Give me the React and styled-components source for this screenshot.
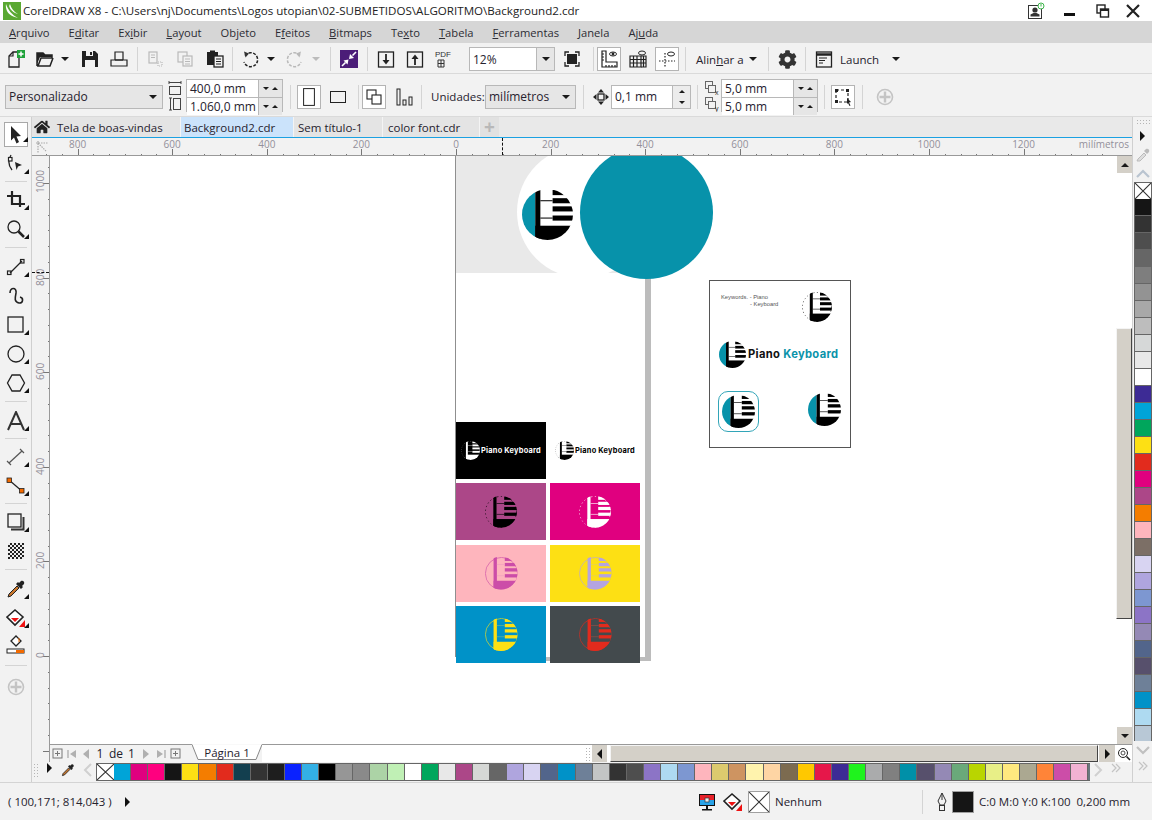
import React from "react";
import styled, { createGlobalStyle } from "styled-components";
import { FaHome, FaCog } from "react-icons/fa";

const GlobalStyle = createGlobalStyle`
  html, body { margin: 0; padding: 0; background: #f2f2f2; overflow: hidden; }
  #root { width: 1152px; height: 820px; overflow: hidden; }
  * { box-sizing: border-box; }
`;

const Window = styled.div`
  width: 1152px;
  height: 820px;
  display: flex;
  flex-direction: column;
  font-family: "Open Sans", "Noto Sans", sans-serif;
  font-size: 11.5px;
  color: #26222e;
  background: #f2f2f2;
`;

const TitleBar = styled.div`
  height: 21px;
  background: #fff;
  display: flex;
  align-items: center;
  padding: 0 0 0 3px;
  color: #222;
  font-size: 11.6px;
`;
const TitleText = styled.span`
  margin-left: 2px;
  flex: 1;
  white-space: nowrap;
`;
const WinBtn = styled.div`
  width: ${(p) => p.$w}px;
  display: flex;
  justify-content: center;
`;

const MenuBar = styled.div`
  height: 22px;
  background: #d6d6d6;
  display: flex;
  align-items: center;
  gap: 19px;
  padding-left: 9px;
  font-size: 11.2px;
  color: #2c2c34;
`;

const Bar = styled.div`
  height: ${(p) => p.$h}px;
  background: #f2f2f2;
  border-bottom: 1px solid #dadada;
  display: flex;
  align-items: center;
  padding-left: ${(p) => p.$pad}px;
  padding-top: ${(p) => p.$top}px;
`;
const Slot = styled.div`
  flex: 0 0 ${(p) => p.$w}px;
  min-width: 0;
  display: flex;
  align-items: center;
  justify-content: center;
`;
const Sep = styled.div`
  flex: 0 0 ${(p) => p.$w}px;
  height: 24px;
  display: flex;
  justify-content: center;
  &::after {
    content: "";
    width: 1px;
    background: #d4d4d4;
  }
`;
const Toggled = styled.div`
  flex: 0 0 24px;
  height: 24px;
  background: #fff;
  border: 1px solid #b4b4b4;
  display: flex;
  align-items: center;
  justify-content: center;
`;
const BarText = styled.span`
  flex: 0 0 ${(p) => p.$w}px;
  padding-left: ${(p) => p.$pad || 0}px;
  white-space: nowrap;
`;

const Combo = styled.div`
  flex: 0 0 ${(p) => p.$w}px;
  height: 24px;
  border: 1px solid #b8b8b8;
  background: ${(p) => (p.$white ? "#fff" : "#e6e6e6")};
  display: flex;
  align-items: center;
  padding-left: 3px;
  position: relative;
  font-size: 12px;
  span { flex: 1; }
`;
const ComboArrow = styled.div`
  width: 18px;
  align-self: stretch;
  background: #e6e6e6;
  border-left: ${(p) => (p.$line ? "1px solid #b8b8b8" : "none")};
  display: flex;
  align-items: center;
  justify-content: center;
`;
const Arrow = styled.i`
  display: block;
  width: 0;
  height: 0;
  border-left: ${(p) => p.$s || 4}px solid transparent;
  border-right: ${(p) => p.$s || 4}px solid transparent;
  ${(p) => (p.$up ? "border-bottom" : "border-top")}: ${(p) => p.$s || 4}px solid ${(p) => p.$c || "#1a1a1a"};
`;
const SideArrow = styled.i`
  display: block;
  width: 0;
  height: 0;
  border-top: 5px solid transparent;
  border-bottom: 5px solid transparent;
  ${(p) => (p.$left ? "border-right" : "border-left")}: 5px solid ${(p) => p.$c || "#111"};
`;

const Stepper = styled.div`
  flex: 0 0 97px;
  height: 33px;
  margin-top: -2px;
  display: flex;
  flex-direction: column;
  border: 1px solid #b8b8b8;
  background: #b8b8b8;
  gap: 1px;
`;
const StepRow = styled.div`
  flex: 1;
  display: flex;
  background: #fff;
  align-items: center;
  padding-left: 3px;
  font-size: 12px;
  span { flex: 1; }
`;
const StepSpin = styled.div`
  width: 24px;
  align-self: stretch;
  background: #e6e6e6;
  border-left: 1px solid #b8b8b8;
  display: flex;
  align-items: center;
  justify-content: space-around;
  padding: 0 2px;
`;
const SpinBox = styled.div`
  flex: 0 0 80px;
  height: 24px;
  border: 1px solid #b8b8b8;
  background: #fff;
  display: flex;
  align-items: center;
  padding-left: 3px;
  font-size: 12px;
  span { flex: 1; }
`;
const SpinCol = styled.div`
  width: 18px;
  align-self: stretch;
  background: #ececec;
  border-left: 1px solid #b8b8b8;
  display: flex;
  flex-direction: column;
  align-items: center;
  justify-content: space-around;
`;

const Workspace = styled.div`
  height: 665px;
  display: flex;
`;
const ToolCol = styled.div`
  flex: 0 0 32px;
  border-right: 1px solid #cfcfcf;
  background: #f2f2f2;
  display: flex;
  flex-direction: column;
  align-items: center;
  padding-top: 5px;
`;
const Tool = styled.div`
  flex: 0 0 29px;
  width: 24px;
  position: relative;
  display: flex;
  align-items: center;
  justify-content: center;
  margin-top: ${(p) => p.$mt || 0}px;
  ${(p) => p.$active && "background:#fff;border:1px solid #a8a8a8;flex-basis:25px;margin-bottom:2px;"}
  ${(p) =>
    p.$corner &&
    `&::after {
      content: "";
      position: absolute;
      right: -1px;
      bottom: 4px;
      border-left: 5px solid transparent;
      border-bottom: 5px solid #111;
    }`}
`;
const ToolSep = styled.div`
  flex: 0 0 ${(p) => p.$h}px;
  width: 22px;
  display: flex;
  align-items: center;
  &::after {
    content: "";
    width: 100%;
    height: 1px;
    background: #d4d4d4;
  }
`;

const Center = styled.div`
  flex: 1;
  min-width: 0;
  display: flex;
  flex-direction: column;
`;
const TabRow = styled.div`
  height: 21px;
  background: #e9e9e9;
  border-bottom: 1px solid #1ba1e2;
  display: flex;
  font-size: 11.5px;
`;
const Tab = styled.div`
  flex: 0 0 ${(p) => p.$w}px;
  background: ${(p) => (p.$active ? "#cbe3fb" : "#e4e4e4")};
  border-right: 1px solid #f4f4f4;
  display: flex;
  align-items: center;
  padding-left: ${(p) => p.$pad}px;
  white-space: nowrap;
  gap: 7px;
`;
const PlusTab = styled.div`
  flex: 0 0 19px;
  background: #e1e1e1;
  color: #b8b8b8;
  font-size: 19px;
  font-weight: 700;
  line-height: 20px;
  text-align: center;
`;

const HRuler = styled.div`
  height: 18px;
  position: relative;
  background: #f2f2f2;
  border-bottom: 1px solid #999;
  overflow: hidden;
`;
const RulerCorner = styled.div`
  position: absolute;
  left: 3px;
  top: 2px;
`;
const HTick = styled.div`
  position: absolute;
  bottom: 0;
  width: 1px;
  height: ${(p) => p.$h}px;
  background: #777;
`;
const HLabel = styled.div`
  position: absolute;
  top: 0;
  width: 40px;
  margin-left: -20px;
  text-align: center;
  font-size: 10px;
  line-height: 13px;
  color: #93909a;
`;
const UnitLabel = styled.div`
  position: absolute;
  right: 3px;
  top: 0;
  font-size: 10px;
  line-height: 13px;
  color: #93909a;
  background: #f2f2f2;
  padding-left: 2px;
`;
const HCursor = styled.div`
  position: absolute;
  left: 470px;
  top: 0;
  bottom: 0;
  border-left: 1px dashed #111;
`;

const MainRow = styled.div`
  flex: 1;
  min-height: 0;
  display: flex;
`;
const VRuler = styled.div`
  flex: 0 0 18px;
  position: relative;
  background: #f2f2f2;
  border-right: 1px solid #999;
  overflow: hidden;
`;
const VTick = styled.div`
  position: absolute;
  right: 0;
  height: 1px;
  width: ${(p) => p.$w}px;
  background: #777;
`;
const VLabel = styled.div`
  position: absolute;
  left: 3px;
  height: 30px;
  margin-top: -16px;
  writing-mode: vertical-rl;
  transform: rotate(180deg);
  text-align: center;
  font-size: 10px;
  line-height: 11px;
  color: #93909a;
`;
const VCursor = styled.div`
  position: absolute;
  left: 0;
  right: 0;
  top: 116px;
  border-top: 1px dashed #111;
`;
const ViewCol = styled.div`
  flex: 1;
  min-width: 0;
  display: flex;
  flex-direction: column;
`;
const ViewRow = styled.div`
  flex: 1;
  min-height: 0;
  display: flex;
`;
const Canvas = styled.div`
  flex: 1;
  position: relative;
  background: #fff;
  overflow: hidden;
`;

const Page = styled.div`
  position: absolute;
  left: 405px;
  top: 0;
  width: 190px;
  height: 501px;
  background: #fff;
  border-left: 1px solid #8f8f8f;
  box-shadow: 6px 4px 0 #bcbcbc;
`;
const GrayBand = styled.div`
  height: 117px;
  background: #e9e9e9;
`;
const Disc = styled.div`
  position: absolute;
  left: ${(p) => p.$x}px;
  top: ${(p) => p.$y}px;
  width: ${(p) => p.$d}px;
  height: ${(p) => p.$d}px;
  border-radius: 50%;
  background: ${(p) => p.$c};
`;
const CardGrid = styled.div`
  position: absolute;
  left: 0;
  top: 266px;
  display: grid;
  grid-template-columns: 90px 90px;
  grid-auto-rows: 57px;
  gap: 4.3px 4px;
`;
const Card = styled.div`
  background: ${(p) => p.$bg};
  display: flex;
  align-items: center;
  justify-content: center;
  gap: 1px;
`;
const MiniBrand = styled.span`
  font-family: Inter, "Liberation Sans", sans-serif;
  font-size: 7.4px;
  font-weight: 700;
  letter-spacing: 0.22px;
  color: ${(p) => p.$c};
  white-space: nowrap;
`;
const Artboard = styled.div`
  position: absolute;
  left: 659px;
  top: 124px;
  width: 142px;
  height: 168px;
  background: #fff;
  border: 1px solid #555;
`;
const ArtItem = styled.div`
  position: absolute;
  left: ${(p) => p.$x}px;
  top: ${(p) => p.$y}px;
`;
const Keywords = styled.div`
  font-family: "Liberation Sans", sans-serif;
  font-size: 5.8px;
  line-height: 7px;
  color: #555;
  white-space: pre;
`;
const Brand = styled.div`
  font-family: Inter, "Liberation Sans", sans-serif;
  font-size: 11.2px;
  font-weight: 700;
  letter-spacing: 0.32px;
  color: #111;
  white-space: nowrap;
  span { color: #0a93aa; margin-left: 3px; }
`;
const AppIcon = styled.div`
  width: 41px;
  height: 41px;
  border: 1px solid #32a5b8;
  border-radius: 10px;
  background: #fff;
  display: flex;
  align-items: center;
  justify-content: center;
`;

const LogoSvg = styled.svg`
  display: block;
  flex: none;
  clip-path: circle(50%);
`;

// piano keyboard mark, the only drawing that repeats on the artboard
const Logo = ({ size, color = "#000", accent, ring, line = color }) => (
  <LogoSvg width={size} height={size} viewBox="0 0 50 50">
    {accent && <rect x="0" y="0" width="13" height="50" fill={accent} />}
    {ring && (
      <circle
        cx="25"
        cy="25"
        r="24.4"
        fill="none"
        stroke={ring}
        strokeWidth="1.2"
        strokeDasharray={ring === color ? "2 4" : "none"}
      />
    )}
    <rect x="13" y="0" width="5" height="50" fill={color} />
    <rect x="13" y="36" width="37" height="14" fill={color} />
    <rect x="30" y="1" width="20" height="5" fill={color} />
    <rect x="30" y="9" width="20" height="5" fill={color} />
    <rect x="30" y="17" width="20" height="5" fill={color} />
    <rect x="30" y="26" width="20" height="5" fill={color} />
    <rect x="18" y="11" width="12" height="1" fill={line} />
    <rect x="18" y="28" width="12" height="1" fill={line} />
  </LogoSvg>
);

const VScroll = styled.div`
  flex: 0 0 17px;
  background: #fff;
  display: flex;
  flex-direction: column;
  padding-left: 1px;
`;
const ScrollBtn = styled.div`
  flex: 0 0 17px;
  background: #d4d0c8;
  display: flex;
  align-items: center;
  justify-content: center;
  border-left: 1px solid #fff;
`;
const VThumb = styled.div`
  height: 291px;
  margin-top: 155px;
  margin-bottom: auto;
  background: #d4d0c8;
  border-top: 1px solid #f4f4f4;
  border-left: 1px solid #f4f4f4;
  border-right: 1px solid #444;
  border-bottom: 1px solid #444;
`;

const DocBar = styled.div`
  flex: 0 0 18px;
  display: flex;
  background: #f2f2f2;
`;
const Pager = styled.div`
  flex: 0 0 142px;
  border-top: 1px solid #999;
  display: flex;
  align-items: center;
  color: #22202a;
  font-size: 12px;
`;
const PagerSlot = styled.div`
  flex: 0 0 ${(p) => p.$w}px;
  display: flex;
  justify-content: center;
`;
const PageTab = styled.div`
  flex: 0 0 70px;
  height: 17px;
  position: relative;
  display: flex;
  align-items: center;
  justify-content: center;
  font-size: 11.5px;
  svg { position: absolute; left: 0; top: 0; }
  span { position: relative; }
`;
const TabFiller = styled.div`
  flex: 0 0 324px;
  border-top: 1px solid #999;
  background: #fff;
`;
const HScroll = styled.div`
  flex: 1;
  border-top: 1px solid #999;
  background: #fff;
  display: flex;
`;
const HBtn = styled.div`
  flex: 0 0 ${(p) => p.$w}px;
  min-width: 0;
  background: ${(p) => p.$bg};
  display: flex;
  align-items: center;
  justify-content: center;
`;
const HThumb = styled.div`
  flex: 1;
  margin: 0 1px 0 3px;
  background: #d4d0c8;
  border-top: 1px solid #f4f4f4;
  border-left: 1px solid #f4f4f4;
  border-right: 1px solid #444;
  border-bottom: 1px solid #444;
`;

const PaletteRow = styled.div`
  flex: 0 0 20px;
  display: flex;
  align-items: flex-start;
  padding-top: 1px;
  background: #f2f2f2;
`;
const Swatches = styled.div`
  flex: 0 0 994px;
  height: 18px;
  display: flex;
  overflow: hidden;
  border: 1px solid #666;
  border-right: none;
`;
const Swatch = styled.div`
  flex: 0 0 17.1px;
  height: 100%;
  border-right: 1px solid #666;
  background: ${(p) => p.$c};
`;
const NoFill = styled.svg`
  display: block;
  flex: none;
  background: #fff;
`;

const RightDock = styled.div`
  flex: 0 0 20px;
  border-left: 1px solid #d0d0d0;
  display: flex;
  flex-direction: column;
  align-items: center;
`;
const DockItem = styled.div`
  flex: 0 0 ${(p) => p.$h}px;
  min-height: 0;
  display: flex;
  align-items: center;
  justify-content: center;
`;
const DockPalette = styled.div`
  width: 18px;
  height: 559px;
  flex: none;
  overflow: hidden;
  border-left: 1px solid #666;
  border-right: 1px solid #666;
  border-top: 1px solid #666;
`;
const DockSwatch = styled.div`
  height: 17px;
  border-bottom: 1px solid #666;
  background: ${(p) => p.$c};
`;

const StatusBar = styled.div`
  flex: 1;
  border-top: 1px solid #d4d4d4;
  display: flex;
  align-items: center;
  padding-left: 8px;
  font-size: 11.5px;
`;
const StatusSwatch = styled.div`
  flex: 0 0 22px;
  height: 22px;
  border: 1px solid #a0a0a0;
  background: ${(p) => p.$c || "#151515"};
`;
const StatusItem = styled.div`
  flex: 0 0 ${(p) => p.$w}px;
  display: flex;
  align-items: center;
  justify-content: ${(p) => (p.$start ? "flex-start" : "center")};
  padding-left: ${(p) => p.$pad || 0}px;
  white-space: nowrap;
`;
const StatusRule = styled.div`
  flex: 0 0 1px;
  height: 24px;
  margin-right: 8px;
  background: #d4d4d4;
`;

const Gear = styled(FaCog)`
  color: #333;
  font-size: 19px;
`;
const Home = styled(FaHome)`
  color: #222;
  font-size: 16px;
  flex: none;
`;

const S = ({ w = 20, h = 20, vb, children }) => (
  <svg width={w} height={h} viewBox={vb || `0 0 ${w} ${h}`} fill="none" stroke="#222" strokeWidth="1.2" style={{ display: "block", flex: "none" }}>
    {children}
  </svg>
);

const CrossBox = ({ w, h }) => (
  <NoFill width={w} height={h} viewBox="0 0 20 20" preserveAspectRatio="none" stroke="#333" strokeWidth="1.1">
    <path d="M0 0L20 20M20 0L0 20" vectorEffect="non-scaling-stroke" />
  </NoFill>
);

const gray = "#b9b9b9";
const Icons = {
  corel: (
    <svg width="18" height="18" viewBox="0 0 18 18" style={{ display: "block" }}>
      <rect width="18" height="18" fill="#5aa832" />
      <path d="M3 2C5 8 9 13 15 16C11 15 6 13 4 9C3 7 2.6 4 3 2Z" fill="#fff" />
      <path d="M7 2C8 6 11 10 15 12C11 11 7.4 8 6.4 5C6 4 6.4 3 7 2Z" fill="#fff" />
    </svg>
  ),
  user: (
    <svg width="18" height="18" viewBox="0 0 18 18" fill="none" style={{ display: "block" }}>
      <rect x="1.5" y="3.5" width="13" height="13" stroke="#333" />
      <circle cx="8" cy="8" r="2.6" fill="#333" />
      <path d="M3.5 14.5h9v-2l-3-1.6h-3l-3 1.6z" fill="#333" />
      <circle cx="14" cy="4" r="3" stroke="#3cb54a" fill="#fff" />
      <path d="M14 2v2.5" stroke="#3cb54a" />
    </svg>
  ),
  min: <S w={12} h={12}><rect x="0" y="8" width="11" height="3" fill="#111" stroke="none" /></S>,
  restore: (
    <S w={14} h={14}>
      <rect x="1" y="1" width="8" height="8" strokeWidth="1.4" />
      <rect x="4.5" y="5" width="8" height="8" fill="#fff" strokeWidth="1.4" />
      <path d="M4.5 6h8" strokeWidth="2" />
    </S>
  ),
  close: <S w={14} h={14}><path d="M1 1l12 12M13 1L1 13" strokeWidth="2.2" /></S>,
  newDoc: (
    <S>
      <path d="M3 18V7l4-4h6v15z" strokeWidth="1.3" />
      <path d="M3 7h4V3" />
      <rect x="11" y="1" width="8" height="8" fill="#1fa23a" stroke="none" />
      <path d="M15 2.5v5M12.5 5h5" stroke="#fff" strokeWidth="1.5" />
    </S>
  ),
  open: (
    <S>
      <path d="M2 17V4h6l2 2h7v3H6L3 17h12l3-8" strokeWidth="1.5" fill="none" />
      <path d="M2 4h6l2 2h7v2H5L2 15z" fill="#222" stroke="none" />
    </S>
  ),
  save: (
    <S>
      <path d="M2 2h13l3 3v13H2z" fill="#222" stroke="none" />
      <rect x="6" y="2" width="7" height="5" fill="#f2f2f2" stroke="none" />
      <rect x="5" y="11" width="10" height="7" fill="#f2f2f2" stroke="none" />
      <rect x="10" y="3" width="2" height="3" fill="#222" stroke="none" />
    </S>
  ),
  print: (
    <S>
      <path d="M6 11V3h8v8" />
      <path d="M2 11h16v6H2z" />
      <path d="M6 11h8" />
    </S>
  ),
  cut: (
    <S>
      <g stroke={gray}>
        <rect x="4" y="3" width="8" height="11" />
        <path d="M6 6h4M6 8.5h4" />
        <rect x="13" y="13" width="4" height="4" strokeDasharray="1 1" />
      </g>
    </S>
  ),
  copy: (
    <S>
      <g stroke={gray}>
        <rect x="3" y="3" width="9" height="10" />
        <rect x="8" y="7" width="9" height="10" fill="#f2f2f2" />
        <path d="M10 10h5M10 12.500h5M10 15h5" />
      </g>
    </S>
  ),
  paste: (
    <S>
      <rect x="2" y="3" width="11" height="13" fill="#222" stroke="none" />
      <rect x="5" y="1.500" width="5" height="3" fill="#222" stroke="none" />
      <rect x="9" y="7" width="9" height="11" fill="#f2f2f2" strokeWidth="1.3" />
      <path d="M11 10h5M11 12.500h5M11 15h5" />
    </S>
  ),
  undo: (
    <S>
      <path d="M5 6.500A7 7 0 1 1 4 13" strokeWidth="1.5" strokeDasharray="3 1.500" />
      <path d="M4 2.500l5 2-3.500 4z" fill="#333" stroke="none" />
    </S>
  ),
  redo: (
    <S>
      <path d="M15 6.500A7 7 0 1 0 16 13" stroke={gray} strokeWidth="1.5" strokeDasharray="3 1.500" />
      <path d="M16 2.500l-5 2 3.500 4z" fill={gray} stroke="none" />
    </S>
  ),
  snap: (
    <svg width="18" height="18" viewBox="0 0 18 18" style={{ display: "block", flex: "none" }}>
      <rect width="18" height="18" fill="#4b1d78" />
      <path d="M16 2l-3.500 3.500" stroke="#fff" strokeWidth="1.600" />
      <path d="M9 9l5-1-4-4z" fill="#fff" />
      <path d="M2 16l3.500-3.500" stroke="#fff" strokeWidth="1.600" />
      <path d="M8.500 9.500l-5 1 4 4z" fill="#fff" />
    </svg>
  ),
  importFile: (
    <S>
      <rect x="2.500" y="3" width="15" height="15" strokeWidth="1.3" />
      <path d="M10 5v9" strokeWidth="1.800" />
      <path d="M6.500 11L10 15.500 13.500 11z" fill="#222" stroke="none" />
    </S>
  ),
  exportFile: (
    <S>
      <rect x="2.500" y="3" width="15" height="15" strokeWidth="1.3" />
      <path d="M10 9v7" strokeWidth="1.800" />
      <path d="M6.500 10L10 5.500 13.500 10z" fill="#222" stroke="none" />
    </S>
  ),
  fullscreen: (
    <S w={16} h={16}>
      <rect x="3" y="3" width="10" height="10" fill="#222" stroke="none" />
      <path d="M1 5V1h4M11 1h4v4M15 11v4h-4M5 15H1v-4" strokeWidth="1.3" />
    </S>
  ),
  rulers: (
    <S>
      <path d="M3 2h4v11h11v5H3z" strokeWidth="1.2" />
      <path d="M3 5h2M3 8h2M3 11h2M7 16v2M10 16v2M13 16v2M16 16v2" />
      <ellipse cx="14" cy="5" rx="3.500" ry="2" strokeWidth="1" />
      <circle cx="14" cy="5" r="0.800" fill="#222" />
    </S>
  ),
  grid: (
    <S>
      <path d="M2 7h11v11H2zM2 10.500h11M2 14h11M5.500 7v11M9 7v11" />
      <path d="M13 7h5v11h-5M13 10.500h5M13 14h5M15.500 7v11" />
      <ellipse cx="14" cy="4" rx="3.500" ry="2" strokeWidth="1" />
    </S>
  ),
  guides: (
    <S>
      <path d="M2 12h16" strokeDasharray="1.500 1.500" />
      <path d="M8 4v15" strokeDasharray="1.500 1.500" />
      <ellipse cx="14" cy="5" rx="3.500" ry="2" strokeWidth="1" />
    </S>
  ),
  launch: (
    <S>
      <rect x="2.500" y="3" width="15" height="15" strokeWidth="1.3" />
      <path d="M2.500 5.500h15" strokeWidth="2.500" />
      <path d="M5 9h8M5 11.500h6M5 14h4" />
    </S>
  ),
  portrait: <S w={12} h={18}><rect x="0.600" y="0.600" width="10.800" height="16.800" strokeWidth="1" /></S>,
  landscape: <S w={18} h={14}><rect x="1.500" y="1.500" width="15" height="11" strokeWidth="1" /></S>,
  pages: (
    <S w={18} h={18}>
      <rect x="2" y="2" width="9" height="9" strokeWidth="1.100" />
      <rect x="7" y="7" width="9" height="9" fill="#fff" strokeWidth="1.100" />
    </S>
  ),
  bars: (
    <S w={18} h={18}>
      <rect x="2" y="1" width="3" height="16" strokeWidth="1" />
      <rect x="8" y="12" width="3" height="5" strokeWidth="1" />
      <rect x="14" y="9" width="3" height="8" strokeWidth="1" />
    </S>
  ),
  nudge: (
    <S w={16} h={16}>
      <rect x="5" y="5" width="6" height="6" strokeWidth="1.300" />
      <path d="M8 0l3 3.500H5zM8 16l3-3.500H5zM0 8l3.500-3v6zM16 8l-3.500-3v6z" fill="#222" stroke="none" />
    </S>
  ),
  frame: (
    <S w={18} h={18}>
      <rect x="2" y="2" width="12" height="12" strokeDasharray="3 2" />
      <path d="M1 1h3v3H1zM12 1h3v3h-3zM1 12h3v3H1z" fill="#222" stroke="none" />
      <path d="M13 10l4 4-2 .500 1.500 3-1 .500-1.500-3-1 1z" fill="#222" stroke="none" />
    </S>
  ),
  plus: (
    <S w={18} h={18}>
      <circle cx="9" cy="9" r="7.500" stroke="#c4c4c4" strokeWidth="1.600" />
      <path d="M9 3.500v11M3.500 9h11" stroke="#c4c4c4" strokeWidth="2.400" />
    </S>
  ),
  pointer: (
    <svg width="14" height="20" viewBox="0 0 14 20" style={{ display: "block" }}>
      <path d="M2 1l10 10-4.500.500L10 17l-2.500 1.500-2.500-6-3 3z" fill="#222" />
    </svg>
  ),
  shape: (
    <S>
      <path d="M5 1C2 6 2 11 6 16" strokeWidth="1.300" />
      <rect x="2.500" y="3.500" width="3.500" height="3.500" fill="#fff" />
      <path d="M9 8l7 3-4 1.500-1.500 3.500z" fill="#222" stroke="none" />
    </S>
  ),
  crop: (
    <S>
      <path d="M1 6h13v11M6 1v13h13" strokeWidth="2.200" />
    </S>
  ),
  zoom: (
    <S>
      <circle cx="8" cy="8" r="6" strokeWidth="1.300" />
      <path d="M12.500 12.500L18 18" strokeWidth="2.500" />
    </S>
  ),
  line: (
    <S>
      <path d="M4 16L16 4" />
      <rect x="1.500" y="14" width="3.500" height="3.500" />
      <rect x="14.500" y="2.500" width="3.500" height="3.500" />
    </S>
  ),
  curve: (
    <S>
      <path d="M4 7C4 1 11 1 10 7c-1 5-2 9 3 10 4 .500 5-5 1-6" strokeWidth="1.600" />
    </S>
  ),
  rect: <S><rect x="2" y="2" width="15" height="15" strokeWidth="1.300" /></S>,
  ellipse: <S><circle cx="10" cy="10" r="8" strokeWidth="1.300" /></S>,
  polygon: <S><path d="M6 2h8l4.500 8-4.500 8H6l-4.500-8z" strokeWidth="1.300" /></S>,
  text: (
    <svg width="18" height="20" viewBox="0 0 18 20" fill="none" stroke="#333" strokeWidth="2" style={{ display: "block" }}>
      <path d="M1 19L9 1l8 18M4 13h10" />
    </svg>
  ),
  dim: (
    <S>
      <path d="M3 16L16 4" strokeWidth="1.200" stroke="#555" />
      <path d="M1 14l4 4M14 2l4 4" stroke="#555" />
    </S>
  ),
  connector: (
    <S>
      <path d="M3 4l14 12" />
      <rect x="1" y="2" width="4.500" height="4.500" fill="#f26a00" stroke="#222" strokeWidth="0.800" />
      <rect x="13.500" y="12.500" width="4.500" height="4.500" fill="#f26a00" stroke="#222" strokeWidth="0.800" />
    </S>
  ),
  shadow: (
    <S>
      <rect x="2" y="2" width="13" height="13" strokeWidth="1.300" />
      <path d="M17.500 5v12.500H5" strokeWidth="2" stroke="#333" />
    </S>
  ),
  checker: (
    <svg width="16" height="16" viewBox="0 0 16 16" style={{ display: "block" }}>
      <rect width="16" height="16" fill="#222" />
      {Array.from({ length: 32 }, (_, i) => {
        const row = Math.floor(i / 4);
        return <rect key={i} x={(i % 4) * 4 + (row % 2) * 2} y={row * 2} width="2" height="2" fill="#eee" />;
      })}
    </svg>
  ),
  dropper: (
    <svg width="20" height="20" viewBox="0 0 20 20" fill="none" style={{ display: "block" }}>
      <path d="M2 18l1-3 8-8 2 2-8 8z" fill="#c8762c" stroke="#222" />
      <path d="M10 5l5 5 2-2-1-1 2-2c1-2-1-4-3-3l-2 2-1-1z" fill="#222" />
    </svg>
  ),
  bucket: (
    <svg width="20" height="20" viewBox="0 0 20 20" fill="none" style={{ display: "block", flex: "none" }}>
      <path d="M1 9l8-7 8 7-8 8z" stroke="#222" strokeWidth="1.600" fill="#fff" />
      <path d="M5 10h8l-4 4z" fill="#e11" />
      <path d="M19 12v7h-6z" fill="#e11" />
    </svg>
  ),
  outline: (
    <svg width="20" height="20" viewBox="0 0 20 20" fill="none" style={{ display: "block" }}>
      <path d="M5 6l5-5 5 5-5 5z" stroke="#222" strokeWidth="1.300" fill="#fff" />
      <path d="M13 3v4" stroke="#f26a00" />
      <rect x="1" y="14" width="17" height="4" fill="#fff" stroke="#222" />
      <rect x="10" y="15" width="8" height="3" fill="#f26a00" />
    </svg>
  ),
  zoomSmall: (
    <S w={14} h={14}>
      <circle cx="6" cy="6" r="4.500" strokeWidth="1" />
      <circle cx="6" cy="6" r="2" strokeWidth="0.800" />
      <path d="M9.500 9.500L13 13" strokeWidth="1.600" />
    </S>
  ),
  pagerAdd: (
    <S w={11} h={11}>
      <rect x="1" y="1" width="9" height="9" stroke="#777" strokeWidth="1" />
      <path d="M5.500 3v5M3 5.500h5" stroke="#777" strokeWidth="1" />
    </S>
  ),
  first: (
    <S w={10} h={10}>
      <path d="M1 1v8" stroke="#b0b0b0" strokeWidth="1.400" />
      <path d="M9 1v8L3 5z" fill="#b0b0b0" stroke="none" />
    </S>
  ),
  prev: (
    <S w={8} h={10}>
      <path d="M7 0v10L1 5z" fill="#b0b0b0" stroke="none" />
    </S>
  ),
  next: (
    <S w={8} h={10}>
      <path d="M1 0v10l6-5z" fill="#b0b0b0" stroke="none" />
    </S>
  ),
  last: (
    <S w={10} h={10}>
      <path d="M9 1v8" stroke="#b0b0b0" strokeWidth="1.400" />
      <path d="M1 1v8l6-4z" fill="#b0b0b0" stroke="none" />
    </S>
  ),
  dots: (
    <svg width="6" height="14" viewBox="0 0 6 14" style={{ display: "block", flex: "none" }}>
      {[1, 4, 7, 10, 13].map((y) => (
        <g key={y} fill="#b5b5b5">
          <rect x="0" y={y} width="1" height="1" />
          <rect x="3" y={y} width="1" height="1" />
        </g>
      ))}
    </svg>
  ),
  dotsWide: (
    <svg width="14" height="6" viewBox="0 0 14 6" style={{ display: "block", flex: "none" }}>
      {[1, 4, 7, 10, 13].map((x) => (
        <g key={x} fill="#b5b5b5">
          <rect x={x} y="1" width="1" height="1" />
          <rect x={x} y="4" width="1" height="1" />
        </g>
      ))}
    </svg>
  ),
  chevL: <S w={10} h={14}><path d="M8 1L2 7l6 6" stroke="#d0d0d0" strokeWidth="2" /></S>,
  chevR: <S w={10} h={14}><path d="M2 1l6 6-6 6" stroke="#d0d0d0" strokeWidth="2" /></S>,
  dbl: <S w={10} h={10}><path d="M1 1l4 4-4 4M5 1l4 4-4 4" stroke="#c4c4c4" /></S>,
  chevU: <S w={14} h={9}><path d="M1 8l6-6 6 6" stroke="#b9c4d0" strokeWidth="2.200" /></S>,
  chevD: <S w={14} h={9}><path d="M1 1l6 6 6-6" stroke="#c0c0c0" strokeWidth="2.200" /></S>,
  dockDrop: (
    <svg width="14" height="14" viewBox="0 0 14 14" style={{ display: "block" }}>
      <path d="M1 13l1-2 6-6 2 2-6 6z" fill="#ddd" stroke="#bbb" />
      <path d="M8 3l3 3 2-2c1-2-1-4-3-3z" fill="#bbb" />
    </svg>
  ),
  monitor: (
    <svg width="18" height="18" viewBox="0 0 18 18" style={{ display: "block" }}>
      <rect x="1" y="1" width="16" height="12" fill="#111" />
      <rect x="2" y="2" width="14" height="5" fill="#e8222a" />
      <rect x="2" y="7" width="14" height="5" fill="#2aa3e8" />
      <rect x="7" y="5" width="4" height="4" fill="#eee" stroke="#333" strokeWidth="0.700" />
      <path d="M4 16h10v1.500H4z" fill="#111" />
      <path d="M8 13h2v3H8z" fill="#111" />
    </svg>
  ),
  pen: (
    <svg width="12" height="20" viewBox="0 0 12 20" fill="none" stroke="#333" style={{ display: "block" }}>
      <path d="M6 1l4 8-2 4H4L2 9z" />
      <path d="M6 1v7" />
      <rect x="3.500" y="13.500" width="5" height="5" />
    </svg>
  ),
};

const menu = [
  ["", "A", "rquivo"],
  ["E", "d", "itar"],
  ["Ex", "i", "bir"],
  ["", "L", "ayout"],
  ["Ob", "j", "eto"],
  ["E", "f", "eitos"],
  ["", "B", "itmaps"],
  ["Te", "x", "to"],
  ["", "T", "abela"],
  ["", "F", "erramentas"],
  ["", "J", "anela"],
  ["Aj", "u", "da"],
];

const bottomColors = [
  "#00a4d8", "#e0007f", "#ff007f", "#151515", "#fde014", "#f47d00", "#e22b1d", "#133f4f", "#333333",
  "#1e1e1e", "#0a22ff", "#33b0e5", "#000000", "#969696", "#8a8a8a", "#acd3a6", "#c0f0b5", "#ffffff",
  "#00a65c", "#e8e8e8", "#ac4788", "#d6d8d6", "#666666", "#afa5de", "#d8d4f2", "#52658b", "#0092c8",
  "#6e8098", "#c3c5c5", "#333333", "#4e4e4e", "#8c74c6", "#aedaf1", "#7d97d1", "#feb5bd", "#dcca6e",
  "#ce9461", "#fff3ad", "#fed5a4", "#7c6b50", "#ffc800", "#e6174a", "#3d2b95", "#1ff31d", "#aaabac",
  "#808080", "#0090a8", "#57506c", "#9489b5", "#6aa97a", "#b9d500", "#e8ef87", "#ffe97f", "#aba891",
  "#ff8438", "#cc4da8", "#f2b2d3", "#69777f",
];

const dockColors = [
  "#151515", "#333333", "#4e4e4e", "#666666", "#7e7e7e", "#939393", "#a8a8a8", "#bdbdbd", "#d6d8d8",
  "#e8e8e8", "#ffffff", "#3d2b95", "#00a4d8", "#00a65c", "#fde014", "#e22b1d", "#e0007f", "#ac4788",
  "#f47d00", "#feb5bd", "#7c6f66", "#d8d4f2", "#afa5de", "#7d97d1", "#8c74c6", "#9489b5", "#52658b",
  "#57506c", "#6e8098", "#0092c8", "#aedaf1", "#b8c8d6",
];

const UNIT = 94.6; // ruler pixels per 200 mm
const ZERO_X = 424; // 0 mm inside the top ruler
const ZERO_Y = 500; // 0 mm inside the left ruler

const hLabels = [-800, -600, -400, -200, 0, 200, 400, 600, 800, 1000, 1200];
const hTicks = Array.from({ length: 68 }, (_, i) => i - 26);
const vLabels = [1000, 800, 600, 400, 200, 0];
const vTicks = Array.from({ length: 44 }, (_, i) => i - 6);

const TopRuler = () => (
  <HRuler>
    <RulerCorner>
      <S w={14} h={14}>
        <path d="M3 1v12M1 3h12M3 3l8 8" stroke="#aaa" strokeDasharray="1.500 1" />
      </S>
    </RulerCorner>
    {hTicks.map((i) => {
      const major = i % 6 === 0;
      return <HTick key={i} $h={major ? 6 : 1} style={{ left: ZERO_X + (i * UNIT) / 6 }} />;
    })}
    {hLabels.map((v) => (
      <HLabel key={v} style={{ left: ZERO_X + (v / 200) * UNIT }}>
        {Math.abs(v)}
      </HLabel>
    ))}
    <UnitLabel>milímetros</UnitLabel>
    <HCursor />
  </HRuler>
);

const LeftRuler = () => (
  <VRuler>
    {vTicks.map((i) => {
      const major = i % 6 === 0;
      return <VTick key={i} $w={major ? 6 : 1} style={{ top: ZERO_Y - (i * UNIT) / 6 }} />;
    })}
    {vLabels.map((v) => (
      <VLabel key={v} style={{ top: ZERO_Y - (v / 200) * UNIT }}>
        {v}
      </VLabel>
    ))}
    <VCursor />
  </VRuler>
);

const TEAL = "#0792aa";

const App = () => (
  <Window>
    <GlobalStyle />
    <TitleBar>
      {Icons.corel}
      <TitleText>CorelDRAW X8 - C:\Users\nj\Documents\Logos utopian\02-SUBMETIDOS\ALGORITMO\Background2.cdr</TitleText>
      <WinBtn $w={22}>{Icons.user}</WinBtn>
      <WinBtn $w={46}>{Icons.min}</WinBtn>
      <WinBtn $w={20}>{Icons.restore}</WinBtn>
      <WinBtn $w={39}>{Icons.close}</WinBtn>
    </TitleBar>
    <MenuBar>
      {menu.map(([a, u, b]) => (
        <span key={a + u + b}>
          {a}
          <u>{u}</u>
          {b}
        </span>
      ))}
    </MenuBar>

    <Bar $h={31} $pad={3} $top={2}>
      <Slot $w={26}>{Icons.newDoc}</Slot>
      <Slot $w={32}>{Icons.open}</Slot>
      <Slot $w={8}><Arrow /></Slot>
      <Slot $w={42}>{Icons.save}</Slot>
      <Slot $w={16}>{Icons.print}</Slot>
      <Sep $w={20} />
      <Slot $w={16}>{Icons.cut}</Slot>
      <Slot $w={44}>{Icons.copy}</Slot>
      <Slot $w={16}>{Icons.paste}</Slot>
      <Sep $w={18} />
      <Slot $w={18}>{Icons.undo}</Slot>
      <Slot $w={24}><Arrow /></Slot>
      <Slot $w={24}>{Icons.redo}</Slot>
      <Slot $w={18}><Arrow $c="#bcbcbc" /></Slot>
      <Sep $w={10} />
      <Slot $w={28}>{Icons.snap}</Slot>
      <Sep $w={8} />
      <Slot $w={30}>{Icons.importFile}</Slot>
      <Slot $w={28}>{Icons.exportFile}</Slot>
      <Slot $w={30}>
        <svg width="18" height="20" viewBox="0 0 18 20" style={{ display: "block", flex: "none" }}>
          <text x="0" y="8" fontSize="8" fontFamily="Liberation Sans" fill="#333">PDF</text>
          <path d="M3 11h6v7H3zM3 14.500h6M6 11v7" fill="none" stroke="#333" />
        </svg>
      </Slot>
      <Slot $w={10} />
      <Combo $w={86} $white>
        <span>12%</span>
        <ComboArrow $line><Arrow /></ComboArrow>
      </Combo>
      <Slot $w={34}>{Icons.fullscreen}</Slot>
      <Sep $w={8} />
      <Toggled>{Icons.rulers}</Toggled>
      <Slot $w={34}>{Icons.grid}</Slot>
      <Toggled>{Icons.guides}</Toggled>
      <Sep $w={12} />
      <BarText $w={54} $pad={5}>
        Alin<u>h</u>ar a
      </BarText>
      <Slot $w={16}><Arrow /></Slot>
      <Sep $w={14} />
      <Slot $w={24}><Gear /></Slot>
      <Sep $w={12} />
      <Slot $w={26}>{Icons.launch}</Slot>
      <BarText $w={48} $pad={3}>Launch</BarText>
      <Slot $w={22}><Arrow /></Slot>
    </Bar>

    <Bar $h={43} $pad={5} $top={3}>
      <Combo $w={158}>
        <span>Personalizado</span>
        <ComboArrow><Arrow /></ComboArrow>
      </Combo>
      <Slot $w={23}>
        <svg width="14" height="32" viewBox="0 0 14 32" fill="none" stroke="#444" style={{ display: "block", flex: "none", marginTop: -2 }}>
          <path d="M1 2.500h12M1 1v3M13 1v3" />
          <rect x="1.500" y="6.500" width="11" height="8" />
          <path d="M1 18h3M1 30h3M2.500 18v12" />
          <rect x="5.500" y="18.500" width="7" height="11" />
        </svg>
      </Slot>
      <Stepper>
        <StepRow>
          <span>400,0 mm</span>
          <StepSpin><Arrow $s={3} /><Arrow $s={3} $up /></StepSpin>
        </StepRow>
        <StepRow>
          <span>1.060,0 mm</span>
          <StepSpin><Arrow $s={3} /><Arrow $s={3} $up /></StepSpin>
        </StepRow>
      </Stepper>
      <Sep $w={14} />
      <Toggled>{Icons.portrait}</Toggled>
      <Slot $w={34}>{Icons.landscape}</Slot>
      <Sep $w={7} />
      <Toggled>{Icons.pages}</Toggled>
      <Slot $w={35}>{Icons.bars}</Slot>
      <Sep $w={1} />
      <BarText $w={63} $pad={9}>Unidades:</BarText>
      <Combo $w={91}>
        <span>milímetros</span>
        <ComboArrow><Arrow /></ComboArrow>
      </Combo>
      <Sep $w={14} />
      <Slot $w={21}>{Icons.nudge}</Slot>
      <SpinBox>
        <span>0,1 mm</span>
        <SpinCol><Arrow $s={3} $up /><Arrow $s={3} /></SpinCol>
      </SpinBox>
      <Sep $w={12} />
      <Slot $w={18}>
        <svg width="16" height="32" viewBox="0 0 16 32" fill="none" stroke="#666" style={{ display: "block", flex: "none", marginTop: -2 }}>
          <rect x="1.500" y="1.500" width="7" height="7" />
          <rect x="4.500" y="5.500" width="7" height="7" fill="#f2f2f2" />
          <text x="11" y="15" fontSize="7" fill="#333" stroke="none" fontFamily="Liberation Sans">x</text>
          <rect x="1.500" y="17.500" width="7" height="7" />
          <rect x="4.500" y="21.500" width="7" height="7" fill="#f2f2f2" />
          <text x="11" y="31" fontSize="7" fill="#333" stroke="none" fontFamily="Liberation Sans">y</text>
        </svg>
      </Slot>
      <Stepper>
        <StepRow>
          <span>5,0 mm</span>
          <StepSpin><Arrow $s={3} /><Arrow $s={3} $up /></StepSpin>
        </StepRow>
        <StepRow>
          <span>5,0 mm</span>
          <StepSpin><Arrow $s={3} /><Arrow $s={3} $up /></StepSpin>
        </StepRow>
      </Stepper>
      <Sep $w={13} />
      <Toggled>{Icons.frame}</Toggled>
      <Sep $w={14} />
      <Slot $w={32}>{Icons.plus}</Slot>
    </Bar>

    <Workspace>
      <ToolCol>
        <Tool $active $corner>{Icons.pointer}</Tool>
        <Tool $corner>{Icons.shape}</Tool>
        <ToolSep $h={7} />
        <Tool $corner>{Icons.crop}</Tool>
        <Tool $corner>{Icons.zoom}</Tool>
        <ToolSep $h={9} />
        <Tool $corner>{Icons.line}</Tool>
        <Tool>{Icons.curve}</Tool>
        <Tool $corner>{Icons.rect}</Tool>
        <Tool $corner>{Icons.ellipse}</Tool>
        <Tool $corner>{Icons.polygon}</Tool>
        <ToolSep $h={9} />
        <Tool $corner>{Icons.text}</Tool>
        <ToolSep $h={7} />
        <Tool $corner>{Icons.dim}</Tool>
        <Tool $corner>{Icons.connector}</Tool>
        <ToolSep $h={7} />
        <Tool $corner>{Icons.shadow}</Tool>
        <Tool>{Icons.checker}</Tool>
        <ToolSep $h={9} />
        <Tool $corner>{Icons.dropper}</Tool>
        <Tool $corner>{Icons.bucket}</Tool>
        <Tool $mt={-2}>{Icons.outline}</Tool>
        <ToolSep $h={13} />
        <Tool>{Icons.plus}</Tool>
      </ToolCol>

      <Center>
        <TabRow>
          <Tab $w={149} $pad={2}>
            <Home />
            Tela de boas-vindas
          </Tab>
          <Tab $w={113} $pad={3} $active>Background2.cdr</Tab>
          <Tab $w={89} $pad={4}>Sem título-1</Tab>
          <Tab $w={97} $pad={5}>color font.cdr</Tab>
          <PlusTab>+</PlusTab>
        </TabRow>
        <TopRuler />
        <MainRow>
          <LeftRuler />
          <ViewCol>
            <ViewRow>
              <Canvas>
                <Page>
                  <GrayBand />
                  <Disc $x={61} $y={-10} $d={132} $c="#fff" />
                  <Disc $x={124} $y={-10} $d={133} $c={TEAL} />
                  <ArtItem $x={66} $y={33}>
                    <Logo size={51} accent={TEAL} />
                  </ArtItem>
                  <CardGrid>
                    <Card $bg="#000">
                      <Logo size={19} color="#fff" ring="#fff" />
                      <MiniBrand $c="#fff">Piano Keyboard</MiniBrand>
                    </Card>
                    <Card $bg="#fff">
                      <Logo size={19} color="#000" ring="#000" />
                      <MiniBrand $c="#000">Piano Keyboard</MiniBrand>
                    </Card>
                    <Card $bg="#ac4788"><Logo size={32} color="#000" ring="#000" /></Card>
                    <Card $bg="#e0007f"><Logo size={32} color="#fff" ring="#fff" /></Card>
                    <Card $bg="#feb5bd"><Logo size={33} color="#cc4da8" ring="#cc4da8cc" line="#f0a0c0" /></Card>
                    <Card $bg="#fde014"><Logo size={33} color="#b4a4e0" ring="#b4a4e0cc" line="#e0d060" /></Card>
                    <Card $bg="#0092c8"><Logo size={33} color="#fde014" ring="#fde014cc" line="#70b890" /></Card>
                    <Card $bg="#434a4d"><Logo size={33} color="#e22b1d" ring="#e22b1dcc" line="#905048" /></Card>
                  </CardGrid>
                </Page>
                <Artboard>
                  <ArtItem $x={11} $y={13}>
                    <Keywords>{"Keywords. - Piano\n                  - Keyboard"}</Keywords>
                  </ArtItem>
                  <ArtItem $x={92} $y={11}><Logo size={30} ring="#000" /></ArtItem>
                  <ArtItem $x={9} $y={60}><Logo size={27} accent={TEAL} /></ArtItem>
                  <ArtItem $x={38} $y={66}>
                    <Brand>Piano<span>Keyboard</span></Brand>
                  </ArtItem>
                  <ArtItem $x={8} $y={110}>
                    <AppIcon><Logo size={33} accent={TEAL} /></AppIcon>
                  </ArtItem>
                  <ArtItem $x={98} $y={112}><Logo size={33} accent={TEAL} /></ArtItem>
                </Artboard>
              </Canvas>
              <VScroll>
                <ScrollBtn><Arrow $up /></ScrollBtn>
                <VThumb />
                <ScrollBtn><Arrow /></ScrollBtn>
              </VScroll>
            </ViewRow>
            <DocBar>
              <Pager>
                <PagerSlot $w={14}>{Icons.pagerAdd}</PagerSlot>
                <PagerSlot $w={15}>{Icons.first}</PagerSlot>
                <PagerSlot $w={14}>{Icons.prev}</PagerSlot>
                <PagerSlot $w={14}>1</PagerSlot>
                <PagerSlot $w={18}>de</PagerSlot>
                <PagerSlot $w={13}>1</PagerSlot>
                <PagerSlot $w={15}>{Icons.next}</PagerSlot>
                <PagerSlot $w={15}>{Icons.last}</PagerSlot>
                <PagerSlot $w={15}>{Icons.pagerAdd}</PagerSlot>
              </Pager>
              <PageTab>
                <svg width="70" height="17" viewBox="0 0 70 17">
                  <path d="M0 .500L6 15.500H64L70 .500" fill="#fff" stroke="#888" />
                </svg>
                <span>Página 1</span>
              </PageTab>
              <TabFiller />
              <HScroll>
                <HBtn $w={6} $bg="#fff">{Icons.dots}</HBtn>
                <HBtn $w={15} $bg="#d4d0c8"><SideArrow $left /></HBtn>
                <HThumb />
                <HBtn $w={16} $bg="#d4d0c8"><SideArrow /></HBtn>
                <HBtn $w={17} $bg="#fff">{Icons.zoomSmall}</HBtn>
              </HScroll>
            </DocBar>
          </ViewCol>
        </MainRow>
        <PaletteRow>
          <Slot $w={10}>{Icons.dots}</Slot>
          <Slot $w={14}><SideArrow /></Slot>
          <Slot $w={24}>
            <S w={14} h={14} vb="0 0 20 20">
              <path d="M2 18l1-3 8-8 2 2-8 8z" fill="#c8762c" stroke="#222" />
              <path d="M10 5l5 5 2-2-1-1 2-2c1-2-1-4-3-3l-2 2-1-1z" fill="#222" stroke="none" />
            </S>
          </Slot>
          <Slot $w={16}>{Icons.chevL}</Slot>
          <Swatches>
            <CrossBox w={17} h={16} />
            {bottomColors.map((c, i) => (
              <Swatch key={i} $c={c} />
            ))}
          </Swatches>
          <Slot $w={16}>{Icons.chevR}</Slot>
          <Slot $w={20}>{Icons.dbl}</Slot>
        </PaletteRow>
      </Center>

      <RightDock>
        <DockItem $h={10}>{Icons.dotsWide}</DockItem>
        <DockItem $h={18}><SideArrow /></DockItem>
        <DockItem $h={20}>{Icons.dockDrop}</DockItem>
        <DockItem $h={17}>{Icons.chevU}</DockItem>
        <DockPalette>
          <CrossBox w={16} h={16} />
          {dockColors.map((c, i) => (
            <DockSwatch key={i} $c={c} />
          ))}
        </DockPalette>
        <DockItem $h={18}>{Icons.chevD}</DockItem>
        <DockItem $h={14}>{Icons.dbl}</DockItem>
      </RightDock>
    </Workspace>

    <StatusBar>
      <StatusItem $w={114} $start>( 100,171; 814,043 )</StatusItem>
      <StatusItem $w={10}><SideArrow /></StatusItem>
      <StatusItem $w={564} />
      <StatusItem $w={22}>{Icons.monitor}</StatusItem>
      <StatusItem $w={30}>{Icons.bucket}</StatusItem>
      <StatusSwatch $c="#fff"><CrossBox w={20} h={20} /></StatusSwatch>
      <StatusItem $w={152} $start $pad={5}>Nenhum</StatusItem>
      <StatusRule />
      <StatusItem $w={21}>{Icons.pen}</StatusItem>
      <StatusSwatch />
      <StatusItem $w={160} $start $pad={5}>C:0 M:0 Y:0 K:100&nbsp;&nbsp;0,200 mm</StatusItem>
    </StatusBar>
  </Window>
);

export default App;
